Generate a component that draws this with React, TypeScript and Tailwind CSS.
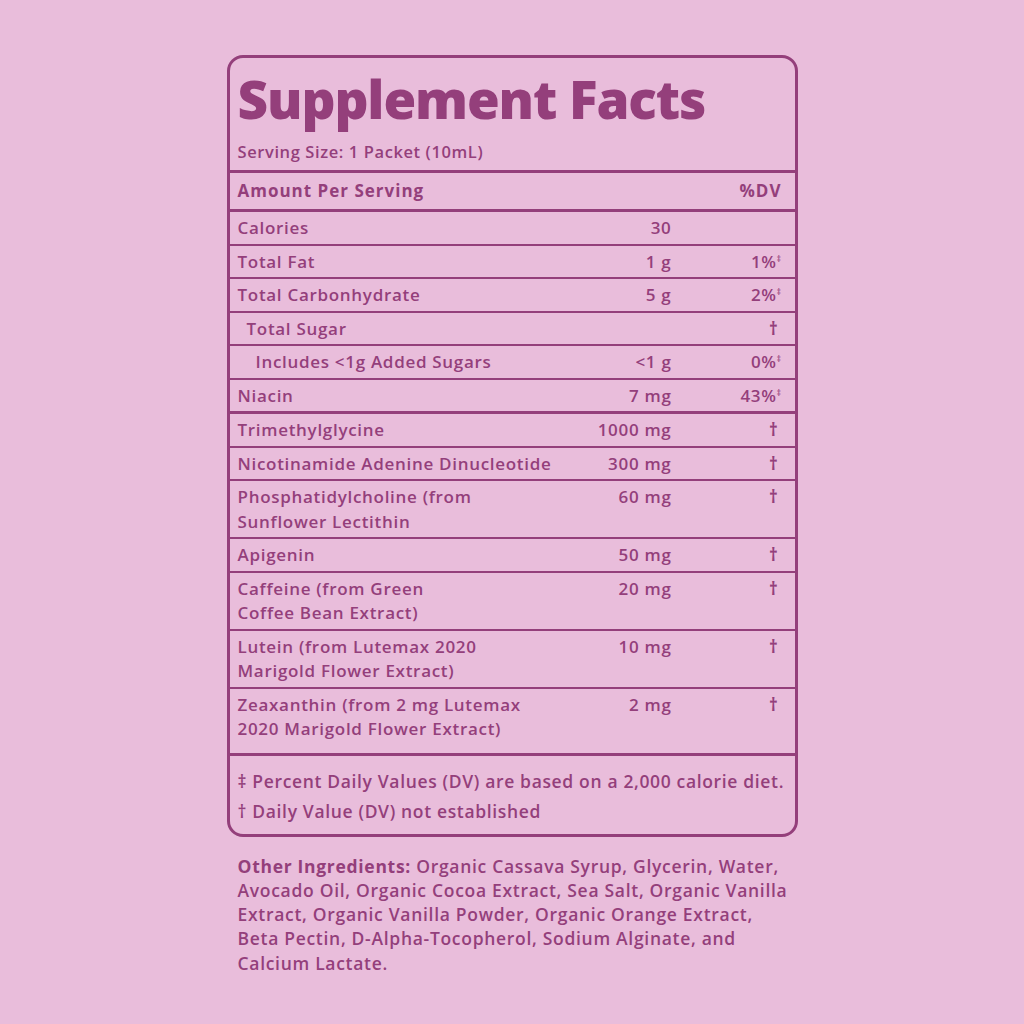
import React from "react";

type Row = {
  label: React.ReactNode;
  amount?: string;
  dv?: string;
  indent?: number;
  thick?: boolean;
  extra?: boolean;
};

const rows: Row[] = [
  { label: "Calories", amount: "30" },
  { label: "Total Fat", amount: "1 g", dv: "1%" },
  { label: "Total Carbonhydrate", amount: "5 g", dv: "2%" },
  { label: "Total Sugar", dv: "†", indent: 1 },
  { label: "Includes <1g Added Sugars", amount: "<1 g", dv: "0%", indent: 2 },
  { label: "Niacin", amount: "7 mg", dv: "43%", thick: true },
  { label: "Trimethylglycine", amount: "1000 mg", dv: "†" },
  { label: "Nicotinamide Adenine Dinucleotide", amount: "300 mg", dv: "†" },
  {
    label: (
      <>
        Phosphatidylcholine (from
        <br />
        Sunflower Lectithin
      </>
    ),
    amount: "60 mg",
    dv: "†",
  },
  { label: "Apigenin", amount: "50 mg", dv: "†" },
  {
    label: (
      <>
        Caffeine (from Green
        <br />
        Coffee Bean Extract)
      </>
    ),
    amount: "20 mg",
    dv: "†",
  },
  {
    label: (
      <>
        Lutein (from Lutemax 2020
        <br />
        Marigold Flower Extract)
      </>
    ),
    amount: "10 mg",
    dv: "†",
  },
  {
    label: (
      <>
        Zeaxanthin (from 2 mg Lutemax
        <br />
        2020 Marigold Flower Extract)
      </>
    ),
    amount: "2 mg",
    dv: "†",
    thick: true,
    extra: true,
  },
];

function Dv({ value }: { value?: string }) {
  if (!value) return null;
  if (value === "†") return <span className="pr-[3px] font-bold">†</span>;
  return (
    <span>
      {value}
      <span className="relative -top-[6px] text-[8px] leading-none align-baseline">‡</span>
    </span>
  );
}

export default function App() {
  return (
    <div
      className="min-h-screen w-full bg-[#e9bddb] text-[#943f7b] flex flex-col items-center pt-[55px]"
      style={{ fontFamily: '"Open Sans", "Liberation Sans", sans-serif' }}
    >
      <div className="w-[571px] border-[3px] border-[#943f7b] rounded-[16px] overflow-hidden font-semibold text-[17px] tracking-[0.7px]">
        <div className="px-2 pt-[11px] pb-[6px] border-b-[3px] border-[#943f7b]">
          <h1 className="text-[53px] leading-[60px] font-extrabold tracking-[-1.1px]">
            Supplement Facts
          </h1>
          <p className="mt-[11px] text-[16.5px] leading-[24px] tracking-[0.6px]">
            Serving Size: 1 Packet (10mL)
          </p>
        </div>

        <div className="flex justify-between pl-2 pr-[13px] py-[6px] leading-[24px] font-bold tracking-[1px] border-b-[3px] border-[#943f7b]">
          <span>Amount Per Serving</span>
          <span>%DV</span>
        </div>

        {rows.map((r, i) => (
          <div
            key={i}
            className={`grid grid-cols-[1fr_100px_110px] pl-2 pr-[13px] pt-[4px] leading-[24.5px] whitespace-nowrap border-b-[#943f7b] ${
              r.thick ? "border-b-[3px]" : "border-b-2"
            } ${r.extra ? "pb-[11px]" : "pb-[3px]"}`}
          >
            <span
              className={
                r.indent === 2 ? "pl-[18px]" : r.indent === 1 ? "pl-[9px]" : ""
              }
            >
              {r.label}
            </span>
            <span className="text-right">{r.amount}</span>
            <span className="text-right">
              <Dv value={r.dv} />
            </span>
          </div>
        ))}

        <div className="pl-2 pr-[4px] pt-[10px] pb-[8px] leading-[30px] text-[17.5px] tracking-[0.65px] whitespace-nowrap">
          <p>‡ Percent Daily Values (DV) are based on a 2,000 calorie diet.</p>
          <p>† Daily Value (DV) not established</p>
        </div>
      </div>

      <p className="w-[571px] pl-[11px] mt-[17px] text-[17.5px] leading-[24.25px] font-semibold tracking-[0.7px] whitespace-nowrap">
        <span className="font-bold">Other Ingredients:</span> Organic Cassava
        Syrup, Glycerin, Water,
        <br />
        Avocado Oil, Organic Cocoa Extract, Sea Salt, Organic Vanilla
        <br />
        Extract, Organic Vanilla Powder, Organic Orange Extract,
        <br />
        Beta Pectin, D-Alpha-Tocopherol, Sodium Alginate, and
        <br />
        Calcium Lactate.
      </p>
    </div>
  );
}
